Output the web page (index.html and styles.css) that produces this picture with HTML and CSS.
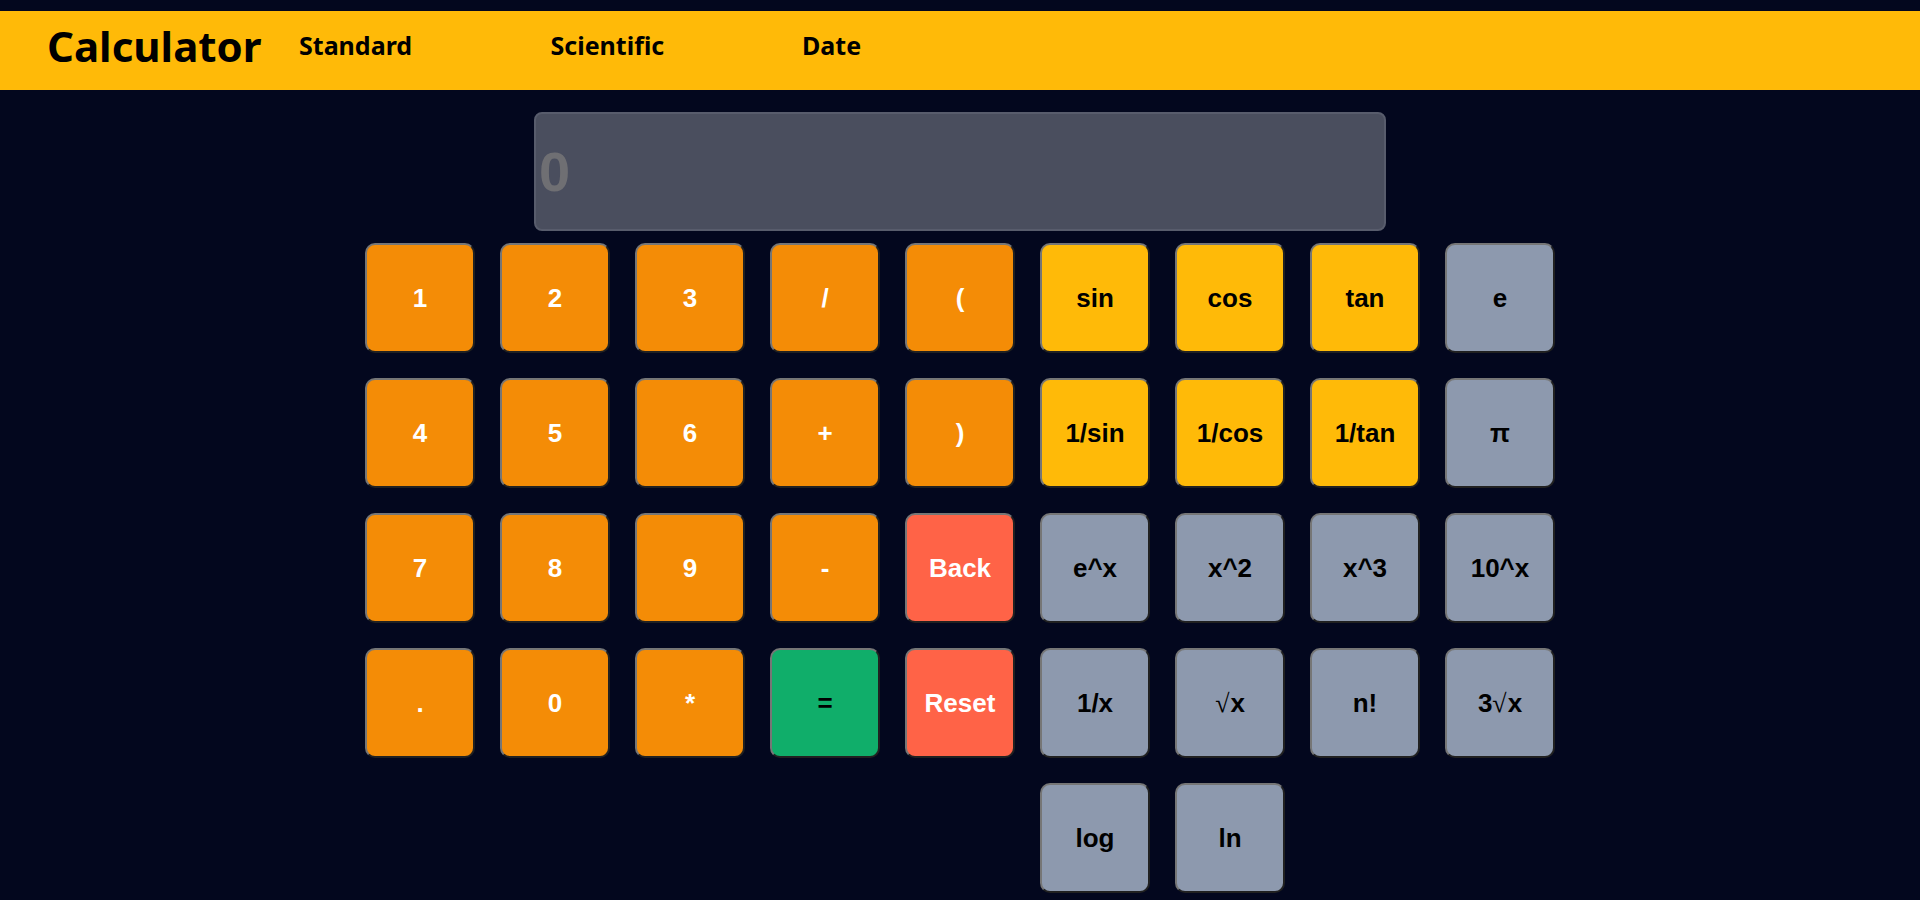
FILE: index.html
```html
<!DOCTYPE html>
<html lang="en">
<head>
<meta charset="utf-8">
<title>Calculator</title>
<link rel="stylesheet" href="styles.css">
</head>
<body>
<header class="topbar">
  <h1 class="brand">Calculator</h1>
  <nav class="nav">
    <a class="nav-link" href="#">Standard</a>
    <a class="nav-link" href="#">Scientific</a>
    <a class="nav-link" href="#">Date</a>
  </nav>
</header>
<main class="calc">
  <div class="display"><span class="display-value">0</span></div>
  <div class="pads">
    <div class="pad pad-standard">
      <button class="key key-orange">1</button>
      <button class="key key-orange">2</button>
      <button class="key key-orange">3</button>
      <button class="key key-orange">/</button>
      <button class="key key-orange">(</button>
      <button class="key key-orange">4</button>
      <button class="key key-orange">5</button>
      <button class="key key-orange">6</button>
      <button class="key key-orange">+</button>
      <button class="key key-orange">)</button>
      <button class="key key-orange">7</button>
      <button class="key key-orange">8</button>
      <button class="key key-orange">9</button>
      <button class="key key-orange">-</button>
      <button class="key key-red">Back</button>
      <button class="key key-orange">.</button>
      <button class="key key-orange">0</button>
      <button class="key key-orange">*</button>
      <button class="key key-green">=</button>
      <button class="key key-red">Reset</button>
    </div>
    <div class="pad pad-sci">
      <button class="key key-yellow">sin</button>
      <button class="key key-yellow">cos</button>
      <button class="key key-yellow">tan</button>
      <button class="key key-gray">e</button>
      <button class="key key-yellow">1/sin</button>
      <button class="key key-yellow">1/cos</button>
      <button class="key key-yellow">1/tan</button>
      <button class="key key-gray">π</button>
      <button class="key key-gray">e^x</button>
      <button class="key key-gray">x^2</button>
      <button class="key key-gray">x^3</button>
      <button class="key key-gray">10^x</button>
      <button class="key key-gray">1/x</button>
      <button class="key key-gray"><span class="radical">√</span>x</button>
      <button class="key key-gray">n!</button>
      <button class="key key-gray">3<span class="radical">√</span>x</button>
      <button class="key key-gray">log</button>
      <button class="key key-gray">ln</button>
    </div>
  </div>
</main>
</body>
</html>
```
FILE: styles.css
```css
html, body {
  margin: 0;
  padding: 0;
  background: #03071e;
}

body {
  padding-top: 11px;
  font-family: "Liberation Sans", Arial, sans-serif;
}

.topbar {
  display: flex;
  align-items: center;
  height: 79px;
  background: #ffba08;
  padding-left: 47px;
  box-sizing: border-box;
}

.brand {
  flex: 0 0 252px;
  margin: 0;
  font-family: "Noto Sans", "Open Sans", sans-serif;
  font-weight: 700;
  font-size: 42px;
  line-height: 1;
  color: #000;
  padding-bottom: 10px;
}

.nav {
  display: flex;
}

.nav-link {
  width: 251.5px;
  font-family: "Noto Sans", "Open Sans", sans-serif;
  font-weight: 700;
  font-size: 25px;
  color: #000;
  text-decoration: none;
  padding-bottom: 12px;
}

.calc {
  display: flex;
  flex-direction: column;
  align-items: center;
  padding-top: 22px;
}

.display {
  width: 852px;
  height: 119px;
  box-sizing: border-box;
  background: #4a4e5e;
  border: 2px solid #585c6c;
  border-radius: 8px;
  display: flex;
  align-items: center;
  padding-left: 3px;
}

.display-value {
  font-family: "Liberation Sans", Arial, sans-serif;
  font-weight: 700;
  font-size: 56px;
  color: #6f6f73;
}

.pads {
  display: flex;
  gap: 25px;
  margin-top: 12px;
}

.pad {
  display: grid;
  grid-auto-rows: 110px;
  gap: 25px;
}

.pad-standard {
  grid-template-columns: repeat(5, 110px);
}

.pad-sci {
  grid-template-columns: repeat(4, 110px);
}

.key {
  width: 110px;
  height: 110px;
  box-sizing: border-box;
  border: 2px outset #767676;
  border-radius: 10px;
  font-family: "Liberation Sans", Arial, sans-serif;
  font-weight: 700;
  font-size: 26px;
  padding: 0;
  cursor: pointer;
}

.radical {
  font-family: "Liberation Serif", "DejaVu Serif", serif;
  font-weight: 400;
  font-size: 26px;
  margin-right: 1px;
}

.key-orange {
  background: #f48c06;
  color: #fff;
}

.key-yellow {
  background: #ffba08;
  color: #000;
}

.key-gray {
  background: #8d99ae;
  color: #000;
}

.key-red {
  background: #ff6347;
  color: #fff;
}

.key-green {
  background: #10ae6a;
  color: #000;
}
```
